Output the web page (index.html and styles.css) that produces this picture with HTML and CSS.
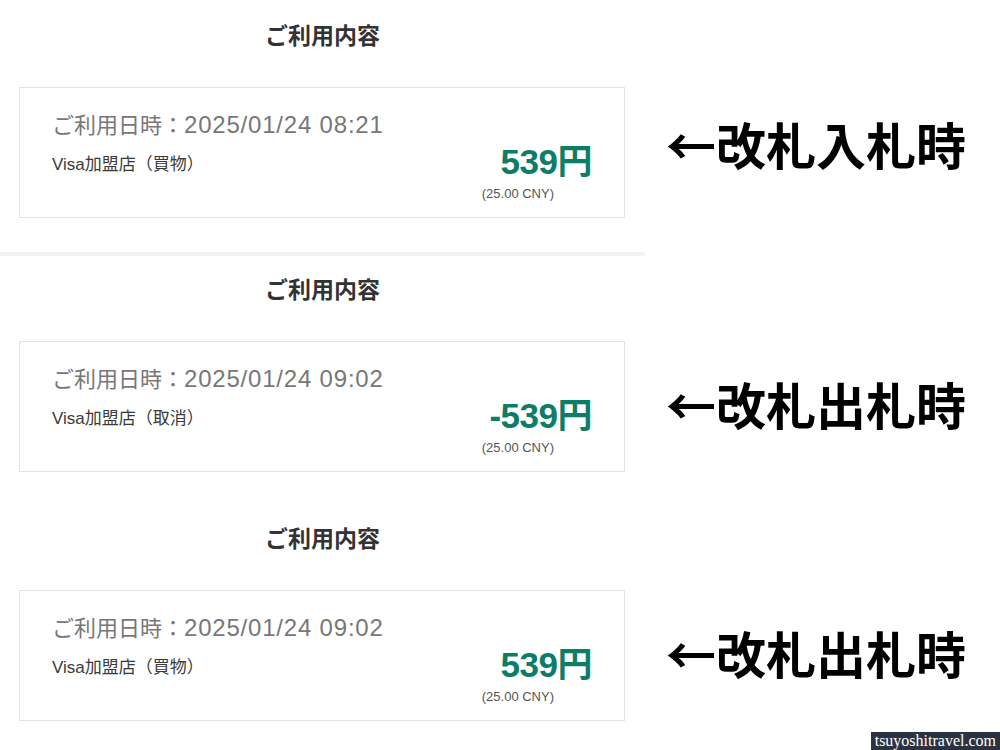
FILE: index.html
```html
<!DOCTYPE html>
<html lang="ja">
<head>
    <meta charset="UTF-8">
    <title>ご利用内容</title>
    <link rel="stylesheet" href="styles.css">
</head>
<body>
<div class="page">
    <section class="usage usage-first">
        <h2>ご利用内容</h2>
        <div class="usage-row">
            <div class="card">
                <div class="card-date">ご利用日時：<span class="date-value">2025/01/24 08:21</span></div>
                <div class="card-main">
                    <span class="shop">Visa加盟店（買物）</span>
                    <span class="amount">539円</span>
                </div>
                <div class="foreign">(25.00 CNY)</div>
            </div>
            <div class="note note-high">←改札入札時</div>
        </div>
        <div class="divider"></div>
    </section>

    <section class="usage usage-second">
        <h2>ご利用内容</h2>
        <div class="usage-row">
            <div class="card">
                <div class="card-date">ご利用日時：<span class="date-value">2025/01/24 09:02</span></div>
                <div class="card-main">
                    <span class="shop">Visa加盟店（取消）</span>
                    <span class="amount">-539円</span>
                </div>
                <div class="foreign">(25.00 CNY)</div>
            </div>
            <div class="note">←改札出札時</div>
        </div>
    </section>

    <section class="usage usage-third">
        <h2>ご利用内容</h2>
        <div class="usage-row">
            <div class="card">
                <div class="card-date">ご利用日時：<span class="date-value">2025/01/24 09:02</span></div>
                <div class="card-main">
                    <span class="shop">Visa加盟店（買物）</span>
                    <span class="amount">539円</span>
                </div>
                <div class="foreign">(25.00 CNY)</div>
            </div>
            <div class="note">←改札出札時</div>
        </div>
    </section>
</div>
<div class="watermark">tsuyoshitravel.com</div>
</body>
</html>
```

FILE: styles.css
```css
* {
    margin: 0;
    padding: 0;
    box-sizing: border-box;
}

body {
    width: 1000px;
    height: 750px;
    overflow: hidden;
    position: relative;
    background: #fff;
    font-family: 'Liberation Sans', 'Noto Sans CJK JP', sans-serif;
    color: #333;
}

.usage {
    width: 645px;
}

.usage-first {
    padding-top: 22px;
}

.usage-second {
    padding-top: 20px;
}

.usage-third {
    padding-top: 53px;
}

h2 {
    height: 30px;
    line-height: 24px;
    text-align: center;
    font-size: 23px;
    font-weight: bold;
    color: #333;
    font-family: 'Noto Sans CJK JP', sans-serif;
    margin-bottom: 35px;
}

.usage-row {
    display: flex;
    align-items: center;
    width: 1000px;
}

.card {
    flex: none;
    width: 606px;
    height: 131px;
    margin-left: 19px;
    border: 1px solid #e2e2e2;
    padding: 22px 32px 0 32px;
}

.card-date {
    height: 32px;
    line-height: 26px;
    font-size: 22px;
    color: #777;
    font-family: 'Noto Sans CJK JP', sans-serif;
}

.date-value {
    font-family: 'Liberation Sans', sans-serif;
    font-size: 24px;
    letter-spacing: 0.8px;
}

.card-main {
    height: 40px;
    display: flex;
    align-items: center;
    justify-content: space-between;
}

.shop {
    font-size: 17px;
    color: #3a3a3a;
}

.amount {
    font-size: 35px;
    line-height: 34px;
    font-weight: bold;
    color: #0c7d66;
    letter-spacing: -0.5px;
}

.foreign {
    margin-top: 3px;
    height: 18px;
    line-height: 18px;
    font-size: 13px;
    color: #555;
    text-align: right;
    padding-right: 38px;
}

.note {
    margin-left: 41px;
    margin-bottom: 8px;
    font-family: 'Noto Sans CJK JP', sans-serif;
    font-size: 50px;
    font-weight: bold;
    color: #000;
    white-space: nowrap;
}

.note-high {
    margin-bottom: 20px;
}

.divider {
    margin-top: 34px;
    height: 4px;
    background: #f2f2f2;
}

/* site stamp over the corner */
.watermark {
    position: absolute;
    right: 0;
    bottom: 0;
    height: 18px;
    padding: 0 4px;
    background: #2c3340;
    color: #fff;
    font-family: 'Liberation Serif', serif;
    font-size: 16px;
    line-height: 18px;
}
```
